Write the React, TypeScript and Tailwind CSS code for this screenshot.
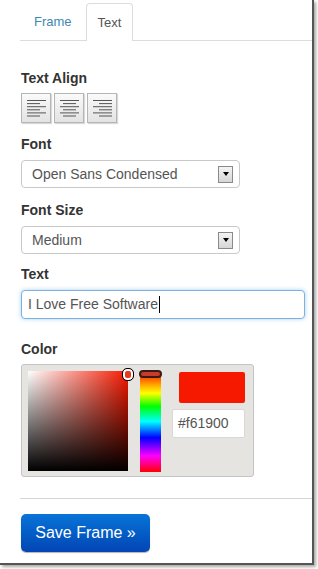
import { useState } from "react";

const labelCls = "text-[14px] font-bold text-[#333] leading-none";

function AlignIcon({ align }: { align: "left" | "center" | "right" }) {
  // long / short lines alternating, like a paragraph glyph
  const rows = [19, 13, 19, 13, 19, 13];
  return (
    <svg width="21" height="18" viewBox="0 0 21 18">
      {rows.map((w, i) => {
        const x = align === "left" ? 1 : align === "right" ? 20 - w : (21 - w) / 2;
        return <rect key={i} x={x} y={1 + i * 3.1} width={w} height="1" fill="#555" />;
      })}
    </svg>
  );
}

function SelectBox({ value }: { value: string }) {
  return (
    <div className="flex h-[28px] w-[219px] items-center justify-between rounded-[4px] border border-[#c9c9c9] bg-white pl-[10px] pr-[6px]">
      <span className="text-[14px] text-[#555]">{value}</span>
      <span className="flex h-[17px] w-[15px] items-center justify-center border border-[#8a8a8a] bg-gradient-to-b from-[#f4f4f4] to-[#d6d6d6]">
        <span className="h-0 w-0 border-x-[3px] border-t-[4px] border-x-transparent border-t-black" />
      </span>
    </div>
  );
}

export default function App() {
  const [tab, setTab] = useState("Text");

  return (
    <div
      className="h-[569px] w-[318px] bg-white"
      style={{ fontFamily: '"Liberation Sans", Arial, sans-serif' }}
    >
      <div className="h-[565px] w-[314px] border-b-[2px] border-r-[2px] border-[#555] shadow-[2px_2px_3px_rgba(0,0,0,0.35)]">
        {/* Tabs */}
        <div className="ml-[20px] flex h-[41px] items-end border-b border-[#dcdcdc] pt-[4px]">
          {["Frame", "Text"].map((t) =>
            t === tab ? (
              <button
                key={t}
                onClick={() => setTab(t)}
                className="-mb-px flex h-[38px] items-center rounded-t-[4px] border border-b-0 border-[#dcdcdc] bg-white px-[11px] text-[13px] text-[#555]"
              >
                {t}
              </button>
            ) : (
              <button
                key={t}
                onClick={() => setTab(t)}
                className="flex h-[37px] items-center px-[14px] text-[13px] text-[#3d8ab0]"
              >
                {t}
              </button>
            )
          )}
        </div>

        <div className="pl-[21px]">
          {/* Text align */}
          <div className={`${labelCls} mt-[30px]`}>Text Align</div>
          <div className="mt-[8px] flex gap-[3px]">
            {(["left", "center", "right"] as const).map((a) => (
              <div
                key={a}
                className="flex h-[30px] w-[30px] items-center justify-center border border-[#b5b5b5] bg-gradient-to-b from-[#fafafa] to-[#e3e3e3] shadow-[1px_1px_1px_rgba(0,0,0,0.15)]"
              >
                <AlignIcon align={a} />
              </div>
            ))}
          </div>

          {/* Font */}
          <div className={`${labelCls} mt-[14px]`}>Font</div>
          <div className="mt-[9px]">
            <SelectBox value="Open Sans Condensed" />
          </div>

          <div className={`${labelCls} mt-[15px]`}>Font Size</div>
          <div className="mt-[9px]">
            <SelectBox value="Medium" />
          </div>

          {/* Text */}
          <div className={`${labelCls} mt-[13px]`}>Text</div>
          <div className="mt-[9px] flex h-[29px] w-[284px] items-center rounded-[4px] border border-[#7fb1de] bg-white pl-[6px] shadow-[0_0_4px_rgba(82,168,236,0.5)]">
            <span className="text-[14px] text-[#555]">I Love Free Software</span>
            <span className="ml-[1px] h-[17px] w-px bg-black" />
          </div>

          {/* Color */}
          <div className={`${labelCls} mt-[23px]`}>Color</div>
          <div className="mt-[8px] flex h-[113px] w-[233px] rounded-[3px] border border-[#c4c4c4] bg-[#e5e4e1] p-[6px]">
            <div className="relative h-[100px] w-[100px] bg-[#f61900]">
              <div className="absolute inset-0 bg-gradient-to-r from-white to-transparent" />
              <div className="absolute inset-0 bg-gradient-to-t from-black to-transparent" />
              <div className="absolute -right-[6px] -top-[3px] h-[13px] w-[12px] rounded-[5px] border border-black bg-[#e53a1e] ring-2 ring-inset ring-white" />
            </div>
            <div className="relative ml-[12px] h-[101px] w-[21px] bg-[linear-gradient(to_bottom,#ff0000_0%,#ffaa00_14%,#ffff00_22%,#00ff00_35%,#00ffff_50%,#0000ff_66%,#ff00ff_84%,#ff0000_100%)]">
              <div className="absolute -left-[1px] -top-[1px] h-[8px] w-[23px] rounded-[4px] border-[2px] border-[#3a1a14] bg-[#c83a2c]" />
            </div>
            <div className="ml-[11px] flex flex-col items-end">
              <div className="mt-[1px] h-[31px] w-[66px] rounded-[2px] bg-[#f61900]" />
              <div className="mt-[6px] flex h-[29px] w-[73px] items-center rounded-[2px] border border-[#d8d8d8] bg-white pl-[5px] text-[14px] text-[#555]">
                #f61900
              </div>
            </div>
          </div>
        </div>

        {/* Divider */}
        <div className="ml-[20px] mt-[21px] border-t border-[#d5d5d5]" />

        {/* Save */}
        <div className="pl-[21px] pt-[15px]">
          <button className="h-[38px] w-[129px] rounded-[5px] bg-gradient-to-b from-[#0a74d8] to-[#0445b4] text-[16px] text-white shadow-[0_1px_1px_rgba(0,0,0,0.3)]">
            Save Frame »
          </button>
        </div>
      </div>
    </div>
  );
}
